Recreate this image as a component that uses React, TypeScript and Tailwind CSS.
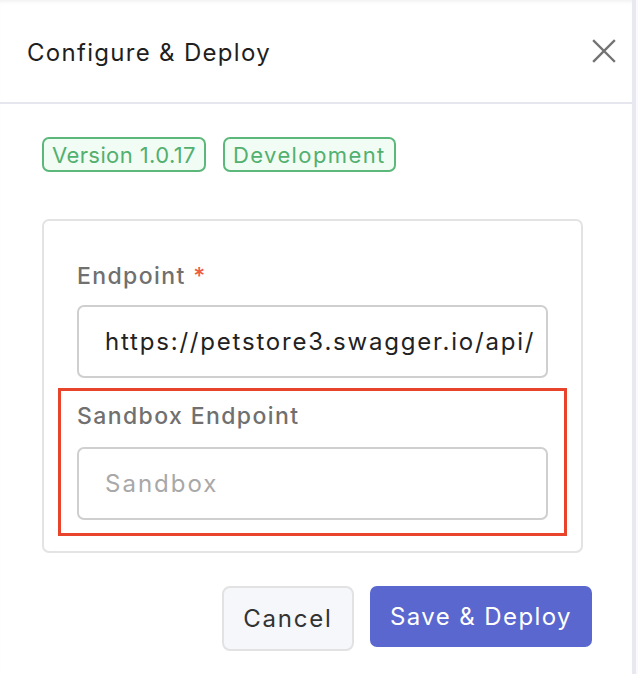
import React from 'react';

const App: React.FC = () => {
  return (
    <div className="w-[638px] h-[674px] bg-white flex overflow-hidden" style={{ fontFamily: 'Inter, "Noto Sans", sans-serif' }}>
      <div className="w-[632px] h-full bg-white flex flex-col shadow-[inset_0_4px_4px_-3px_rgba(0,0,0,0.08)]">
        {/* header */}
        <div className="h-[104px] border-b-2 border-[#e6e6ee] flex items-center justify-between pl-[27px] pr-[14px]">
          <h2 className="text-[24px] text-[#1f1f1f] tracking-[1.3px] mt-[4px]">Configure &amp; Deploy</h2>
          <button className="w-[28px] h-[28px] flex items-center justify-center text-[#737373]">
            <svg width="24" height="24" viewBox="0 0 24 24" fill="none" stroke="currentColor" strokeWidth="2.4" strokeLinecap="square">
              <path d="M2 2 L22 22 M22 2 L2 22" />
            </svg>
          </button>
        </div>

        <div className="pl-[42px] pr-[49px] pt-[33px]">
          <div className="flex gap-[17px]">
            <span className="h-[35px] px-[8px] flex items-center rounded-[7px] border-2 border-[#5cb87a] bg-[#f1fcf4] text-[#52b06f] text-[22px] tracking-[0.4px] leading-none">Version 1.0.17</span>
            <span className="h-[35px] px-[8px] flex items-center rounded-[7px] border-2 border-[#5cb87a] bg-[#f1fcf4] text-[#52b06f] text-[22px] tracking-[1.4px] leading-none">Development</span>
          </div>

          <div className="mt-[47px] border-2 border-[#e3e3e3] rounded-[7px] pt-[40px] pb-[15px] px-[14px]">
            <div className="px-[19px]">
              <label className="block text-[23px] font-medium text-[#707070] tracking-[1.4px] leading-[30px]">
                Endpoint <span className="text-[#ee5a3f] tracking-normal">*</span>
              </label>
              <div className="mt-[14px] h-[73px] border-2 border-[#cfcfcf] rounded-[7px] flex items-center px-[26px] overflow-hidden">
                <span className="text-[24px] text-[#222] tracking-[1.8px] whitespace-nowrap">https://petstore3.swagger.io/api/</span>
              </div>
            </div>

            <div className="mt-[10px] border-[3px] border-[#e8432b] px-[16px] pt-[10px] pb-[13px]">
              <label className="block text-[23px] font-medium text-[#707070] tracking-[1.4px] leading-[30px]">Sandbox Endpoint</label>
              <div className="mt-[16px] h-[73px] border-2 border-[#cfcfcf] rounded-[7px] flex items-center px-[26px]">
                <span className="text-[24px] text-[#a8a8a8] tracking-[2px]">Sandbox</span>
              </div>
            </div>
          </div>

          <div className="flex justify-end gap-[16px] mt-[33px] mr-[-9px]">
            <button className="h-[65px] w-[132px] rounded-[8px] border-2 border-[#e2e2e2] bg-[#f6f7fb] text-[24px] tracking-[1.8px] text-[#333]">Cancel</button>
            <button className="h-[61px] w-[222px] rounded-[7px] bg-[#5a67cf] text-[24px] tracking-[1.4px] text-white">Save &amp; Deploy</button>
          </div>
        </div>
      </div>
      <div className="w-[4px] h-full bg-[#e8e8f0]" />
      <div className="flex-1 h-full bg-[#fafafc]" />
    </div>
  );
};

export default App;
